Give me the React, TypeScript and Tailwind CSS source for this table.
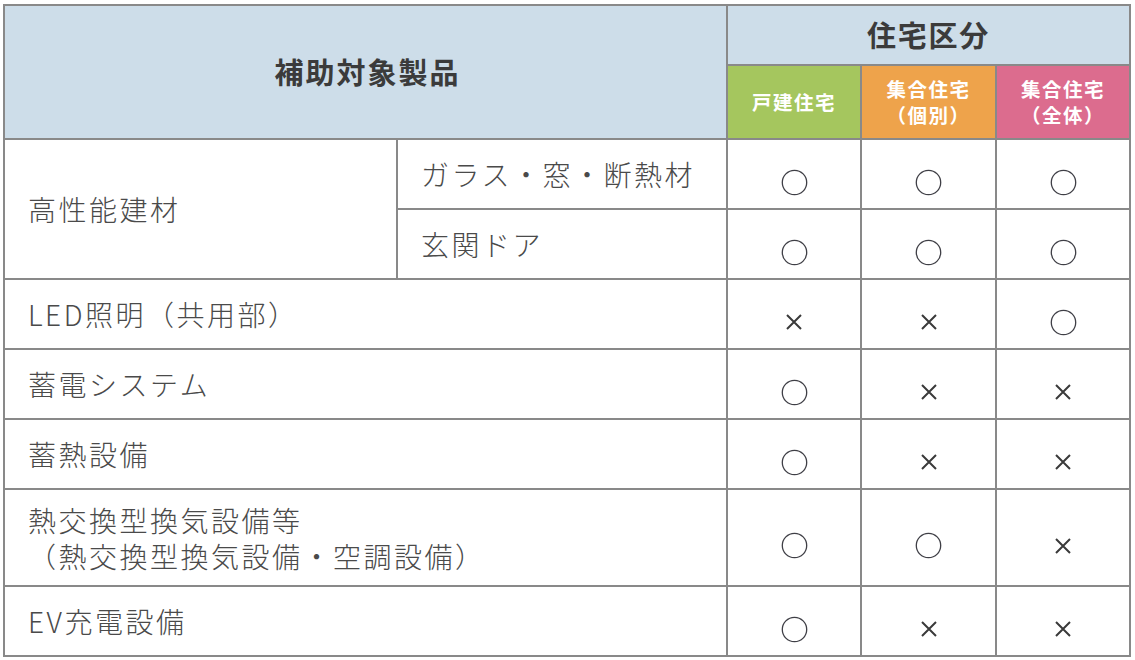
const FONT = { fontFamily: '"Noto Sans CJK JP", "Noto Sans", sans-serif' }

type Mark = "o" | "x"

interface Row {
  label: string[]
  marks: Mark[]
}

const rows: Row[] = [
  { label: ["LED照明（共用部）"], marks: ["x", "x", "o"] },
  { label: ["蓄電システム"], marks: ["o", "x", "x"] },
  { label: ["蓄熱設備"], marks: ["o", "x", "x"] },
  {
    label: ["熱交換型換気設備等", "（熱交換型換気設備・空調設備）"],
    marks: ["o", "o", "x"],
  },
  { label: ["EV充電設備"], marks: ["o", "x", "x"] },
]

function MarkCell({ mark }: { mark: Mark }) {
  return (
    <div className="flex items-center justify-center bg-white pt-4">
      {mark === "o" ? (
        <svg width="27" height="27" viewBox="0 0 27 27">
          <circle cx="13.5" cy="13.5" r="12.2" fill="none" stroke="#3f3f46" strokeWidth="1.3" />
        </svg>
      ) : (
        <svg width="18" height="18" viewBox="0 0 18 18">
          <path d="M2 2 L16 16 M16 2 L2 16" stroke="#3a3a3a" strokeWidth="2" />
        </svg>
      )}
    </div>
  )
}

export default function App() {
  return (
    <div className="min-h-[660px] w-[1135px] bg-white pl-[3px] pt-[4px]" style={FONT}>
      <div className="grid w-[1128px] grid-cols-[391px_328px_132px_133px_132px] grid-rows-[58px_72px_68px_68px_68px_68px_68px_95px_68px] gap-[2px] bg-[#898989] p-[2px] text-[#4a4a4a]">
        {/* header */}
        <div className="col-span-2 row-span-2 flex items-center justify-center bg-[#cddde9] pl-[4px] text-[29px] font-bold tracking-[2px] text-[#3b3b3b]">
          補助対象製品
        </div>
        <div className="col-span-3 flex items-center justify-center bg-[#cddde9] text-[29px] font-bold tracking-[1.8px] text-[#3b3b3b]">
          住宅区分
        </div>
        <div className="flex items-center justify-center bg-[#a5c65e] text-[19.5px] font-bold tracking-[1.5px] text-white">
          戸建住宅
        </div>
        <div className="flex flex-col items-center justify-center bg-[#eea34b] text-[19.5px] leading-[26px] font-bold tracking-[1.5px] text-white">
          <span>集合住宅</span>
          <span>（個別）</span>
        </div>
        <div className="flex flex-col items-center justify-center bg-[#dc6c8e] text-[19.5px] leading-[26px] font-bold tracking-[1.5px] text-white">
          <span>集合住宅</span>
          <span>（全体）</span>
        </div>

        {/* 高性能建材 */}
        <div className="row-span-2 flex items-center bg-white pl-[23px] text-[28px] font-light tracking-[2.5px]">
          高性能建材
        </div>
        <div className="flex items-center bg-white pl-[23px] text-[28px] font-light tracking-[2.5px]">
          ガラス・窓・断熱材
        </div>
        <MarkCell mark="o" />
        <MarkCell mark="o" />
        <MarkCell mark="o" />
        <div className="flex items-center bg-white pl-[23px] text-[28px] font-light tracking-[2.5px]">
          玄関ドア
        </div>
        <MarkCell mark="o" />
        <MarkCell mark="o" />
        <MarkCell mark="o" />

        {rows.map((r) => (
          <div key={r.label[0]} className="contents">
            <div className="col-span-2 flex flex-col justify-center bg-white pl-[23px] text-[28px] leading-[36px] font-light tracking-[2.5px]">
              {r.label.map((l) => (
                <span key={l}>{l}</span>
              ))}
            </div>
            {r.marks.map((m, i) => (
              <MarkCell key={i} mark={m} />
            ))}
          </div>
        ))}
      </div>
    </div>
  )
}
